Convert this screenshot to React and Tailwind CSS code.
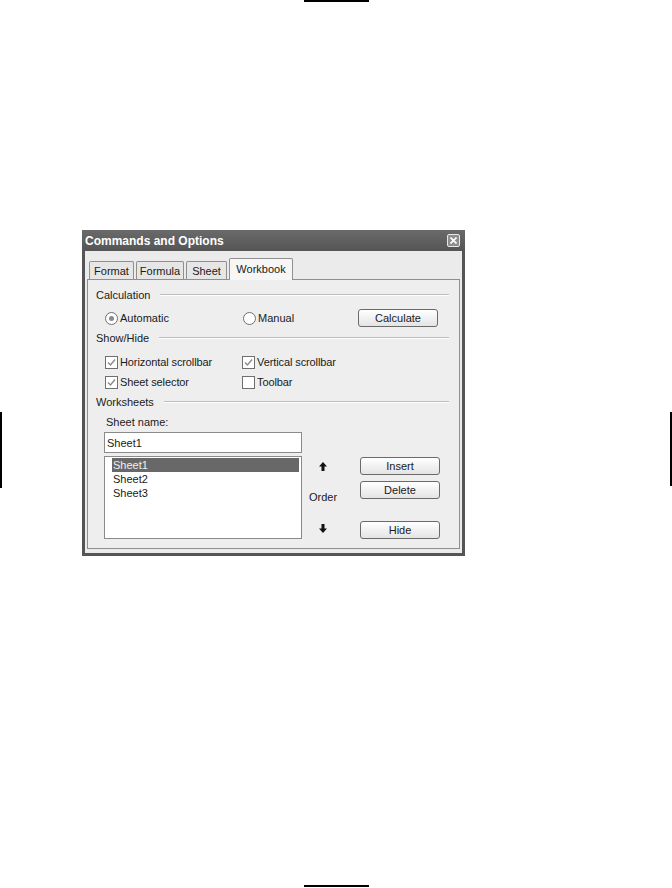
import React from "react";

const font = { fontFamily: '"Liberation Sans", Arial, sans-serif' };

function GroupHeader({ label, className = "" }) {
  return (
    <div className={"flex items-center h-[14px] pl-[8px] pr-[10px] " + className}>
      <span className="text-[11px] leading-[14px] text-[#1a1a1a]">{label}</span>
      <div className="flex-1 ml-[10px] flex flex-col">
        <div className="h-px bg-[#bdbdbd]" />
        <div className="h-px bg-white" />
      </div>
    </div>
  );
}

function Radio({ checked, label }) {
  return (
    <div className="flex items-center gap-[2px]">
      <div className="w-[13px] h-[13px] rounded-full border border-[#6f6f6f] bg-white flex items-center justify-center">
        {checked && <div className="w-[5px] h-[5px] rounded-full bg-[#8a8a8a]" />}
      </div>
      <span className="text-[11px] leading-[14px] text-[#1a1a1a]">{label}</span>
    </div>
  );
}

function Check({ checked, label }) {
  return (
    <div className="flex items-center gap-[2px]">
      <div className="w-[13px] h-[13px] border border-[#6f6f6f] bg-white flex items-center justify-center">
        {checked && (
          <svg width="9" height="9" viewBox="0 0 9 9">
            <path d="M1 4.5 L3.5 7 L8 1.5" fill="none" stroke="#8a8a8a" strokeWidth="1.4" />
          </svg>
        )}
      </div>
      <span className="text-[11px] leading-[14px] text-[#1a1a1a] tracking-[-0.1px]">{label}</span>
    </div>
  );
}

function Button({ children, className = "" }) {
  return (
    <div
      className={
        "w-[80px] h-[18px] rounded-[3px] border border-[#6a6a6a] bg-gradient-to-b from-white to-[#e4e4e4] flex items-center justify-center text-[11px] leading-[14px] text-[#1a1a1a] " +
        className
      }
    >
      {children}
    </div>
  );
}

function Arrow({ down }) {
  return (
    <svg width="8" height="9" viewBox="0 0 8 9" style={down ? { transform: "rotate(180deg)" } : undefined}>
      <path d="M4 0 L8 4.5 L5.5 4.5 L5.5 9 L2.5 9 L2.5 4.5 L0 4.5 Z" fill="#111" />
    </svg>
  );
}

function Tab({ label, w, active }) {
  if (active) {
    return (
      <div
        className={`h-[22px] ${w} border border-b-0 border-[#8f8f8f] bg-[#f6f6f6] rounded-t-[2px] flex items-start justify-center pt-[3px] text-[11px] leading-[14px] text-[#1a1a1a] relative -mb-px z-10`}
      >
        {label}
      </div>
    );
  }
  return (
    <div
      className={`h-[18px] ${w} border border-b-0 border-[#8f8f8f] bg-[#e6e6e6] rounded-t-[2px] flex items-center justify-center text-[11px] leading-[14px] text-[#1a1a1a]`}
    >
      {label}
    </div>
  );
}

export default function App() {
  return (
    <div className="relative w-[672px] h-[888px] bg-white overflow-hidden" style={font}>
      {/* crop marks */}
      <div className="absolute left-[304px] top-0 w-[65px] h-[2px] bg-black" />
      <div className="absolute left-[304px] top-[885px] w-[65px] h-[2px] bg-black" />
      <div className="absolute left-0 top-[412px] w-[2px] h-[76px] bg-black" />
      <div className="absolute left-[670px] top-[412px] w-[2px] h-[74px] bg-black" />

      <div className="pt-[230px] pl-[82px]">
        <div className="w-[383px] bg-[#555555] px-[3px] pb-[3px]">
          {/* title bar */}
          <div className="h-[21px] -mx-[3px] bg-gradient-to-b from-[#6a6a6a] to-[#555555] flex items-center justify-between pl-[3px] pr-[5px]">
            <span className="text-white font-bold text-[12px] leading-[14px]">Commands and Options</span>
            <div className="w-[13px] h-[13px] border border-[#e8e8e8] rounded-[2px] bg-[#8e8e8e] flex items-center justify-center">
              <svg width="7" height="7" viewBox="0 0 7 7">
                <path d="M0.5 0.5 L6.5 6.5 M6.5 0.5 L0.5 6.5" stroke="white" strokeWidth="1.6" />
              </svg>
            </div>
          </div>
          {/* body */}
          <div className="bg-[#ebebeb] pt-[7px] px-[2px] pb-[4px]">
            <div className="flex items-end gap-[2px] pl-[2px]">
              <Tab label="Format" w="w-[45px]" />
              <Tab label="Formula" w="w-[48px]" />
              <Tab label="Sheet" w="w-[41px]" />
              <Tab label="Workbook" w="w-[64px]" active />
            </div>
            <div className="border border-[#8f8f8f] bg-[#eeeeee] h-[270px] flex flex-col pt-[8px]">
              <GroupHeader label="Calculation" />
              <div className="mt-[7px] h-[18px] flex items-center pl-[17px] pr-[21px]">
                <div className="w-[138px]">
                  <Radio checked label="Automatic" />
                </div>
                <div className="flex-1">
                  <Radio label="Manual" />
                </div>
                <Button>Calculate</Button>
              </div>
              <GroupHeader label="Show/Hide" className="mt-[4px]" />
              <div className="mt-[9px] h-[16px] flex items-center pl-[17px]">
                <div className="w-[137px]">
                  <Check checked label="Horizontal scrollbar" />
                </div>
                <Check checked label="Vertical scrollbar" />
              </div>
              <div className="mt-[4px] h-[16px] flex items-center pl-[17px]">
                <div className="w-[137px]">
                  <Check checked label="Sheet selector" />
                </div>
                <Check label="Toolbar" />
              </div>
              <GroupHeader label="Worksheets" className="mt-[5px]" />
              <div className="mt-[6px] h-[14px] pl-[18px] text-[11px] leading-[14px] text-[#1a1a1a]">Sheet name:</div>
              <div className="mt-[3px] ml-[16px] w-[198px] h-[21px] border border-[#8a8a8a] bg-white flex items-center pl-[2px] text-[11px] leading-[14px] text-[#1a1a1a]">
                Sheet1
              </div>
              <div className="mt-[3px] ml-[16px] flex">
                <div className="w-[198px] h-[83px] border border-[#8a8a8a] bg-white pt-[1px] pl-[7px] pr-[2px] text-[11px] leading-[14px]">
                  <div className="h-[14px] bg-[#686868] text-[#f0f0f0] pl-px">Sheet1</div>
                  <div className="h-[14px] text-[#1a1a1a] pl-px">Sheet2</div>
                  <div className="h-[14px] text-[#1a1a1a] pl-px">Sheet3</div>
                </div>
                <div className="w-[42px] h-[83px] flex flex-col items-center">
                  <div className="mt-[6px] h-[9px] flex justify-center"><Arrow /></div>
                  <div className="mt-[19px] text-[11px] leading-[14px] text-[#1a1a1a]">Order</div>
                  <div className="mt-[20px] h-[9px] flex justify-center"><Arrow down /></div>
                </div>
                <div className="flex flex-col ml-[16px]">
                  <Button className="mt-[1px]">Insert</Button>
                  <Button className="mt-[6px]">Delete</Button>
                  <Button className="mt-[22px]">Hide</Button>
                </div>
              </div>
            </div>
          </div>
        </div>
      </div>
    </div>
  );
}
